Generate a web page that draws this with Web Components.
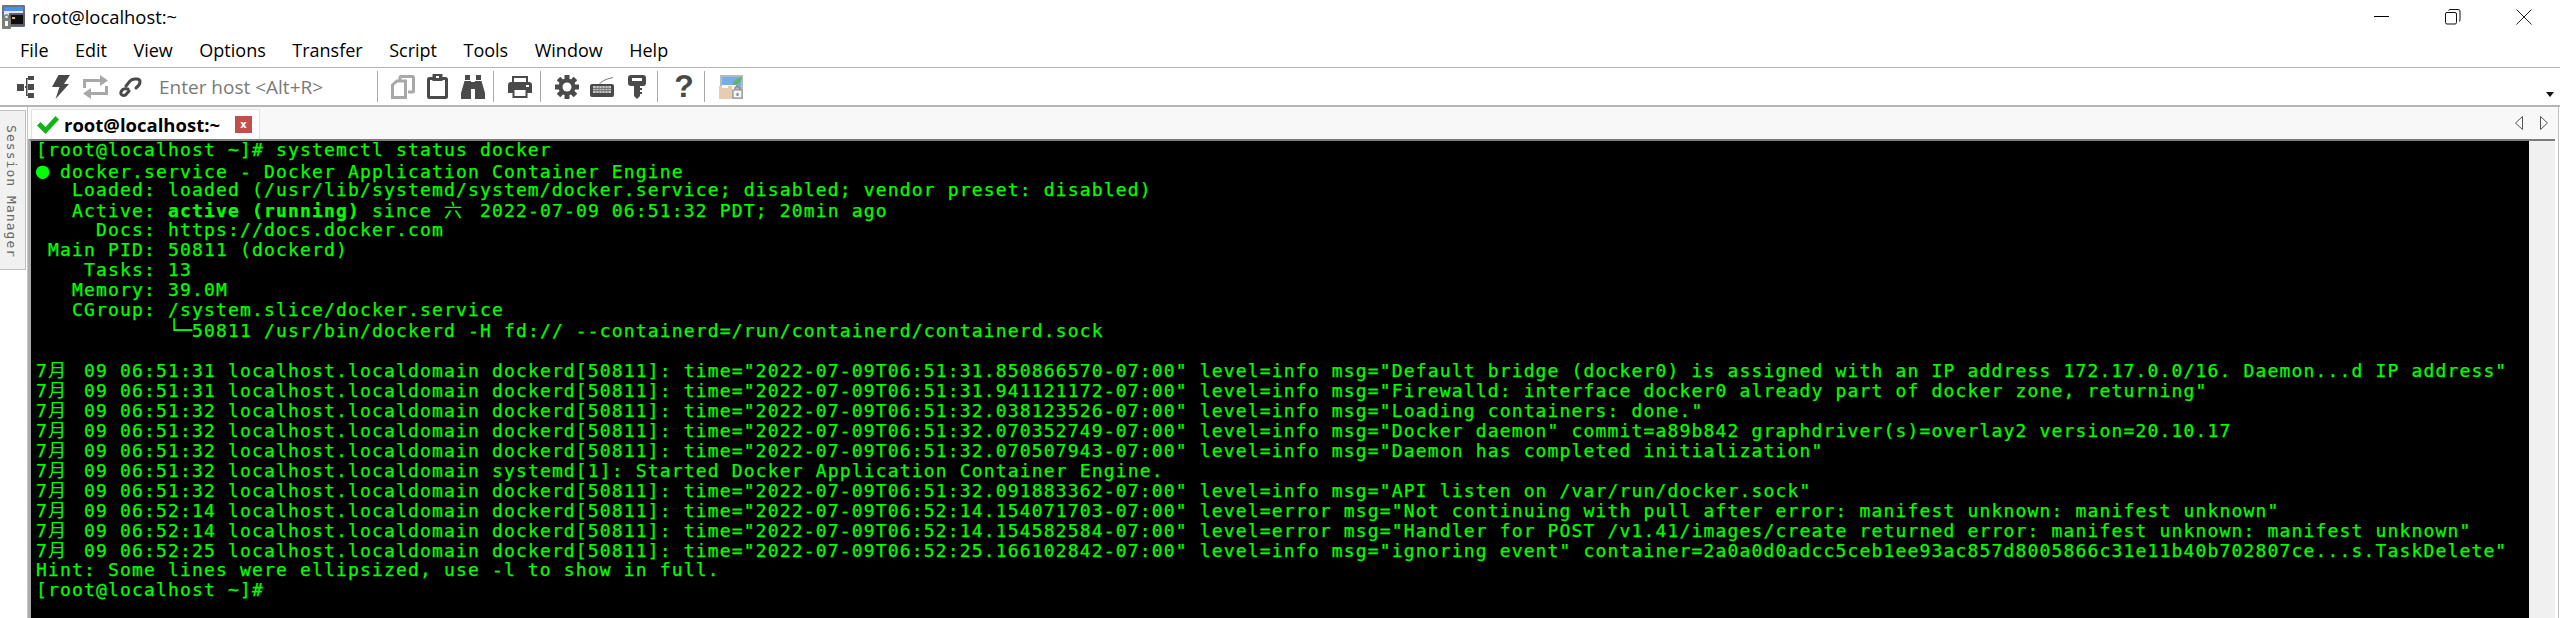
<!DOCTYPE html>
<html><head><meta charset="utf-8"><style>html,body{margin:0;padding:0;background:#fff;height:100%;overflow:hidden}</style></head><body>
<crt-app></crt-app>
<script>
const G='#4a4a4a',L='#a8a8a8';
const ico={
tree:`<svg width="18" height="22" viewBox="0 0 18 22" fill="${G}"><rect x="0" y="8" width="7" height="7"/><rect x="11" y="0" width="6" height="4"/><rect x="11" y="8" width="6" height="6"/><rect x="11" y="17" width="6" height="5"/><rect x="8" y="10" width="2" height="2"/><rect x="9" y="2" width="1.500" height="18"/><rect x="10" y="2" width="1" height="1"/><rect x="10" y="19" width="1" height="1"/></svg>`,
bolt:`<svg width="18" height="24" viewBox="0 0 18 24" fill="#484848"><path d="M6.500 0H18L12 9H17L3.500 24L7.500 12H0Z"/></svg>`,
loop:`<svg width="25" height="24" viewBox="0 0 25 24" fill="none" stroke="${L}" stroke-width="3"><path d="M1.500 13V5.500H18"/><path d="M23.500 11V18.500H7"/><path d="M17 0L25 5.500L17 11Z" fill="${L}" stroke="none"/><path d="M8 13L0 18.500L8 24Z" fill="${L}" stroke="none"/></svg>`,
link:`<svg width="23" height="20" viewBox="0 0 23 20" fill="none" stroke="${G}" stroke-width="3" stroke-linecap="round" stroke-linejoin="round"><path d="M7 9L11 4Q13 2 16 2H18Q21 2 21 5Q21 8 17 11"/><path d="M9 12Q4 11 2.500 14Q1 17 3 18Q5 19 7 17.500L10 14"/></svg>`,
copy:`<svg width="24" height="24" viewBox="0 0 24 24" fill="none" stroke="${L}" stroke-width="3"><path d="M1.500 10L6 6H14.500V22.500H1.500Z"/><path d="M9 5V2.500Q9 1.500 10 1.500H21.500Q22.500 1.500 22.500 2.500V16Q22.500 17 21.500 17H17"/></svg>`,
paste:`<svg width="21" height="25" viewBox="0 0 21 25" fill="none" stroke="${G}" stroke-width="3"><rect x="1.500" y="4.500" width="18" height="19" rx="1"/><rect x="5.500" y="0" width="10" height="7" fill="${G}" stroke="none"/><rect x="9" y="2" width="3" height="2" fill="#fff" stroke="none"/></svg>`,
bino:`<svg width="24" height="24" viewBox="0 0 24 24" fill="${G}"><path d="M4 0H9V5H4Z"/><path d="M15 0H20V5H15Z"/><path d="M3.500 6H10V24H0V18Z"/><path d="M20.500 6H14V24H24V18Z"/><rect x="10" y="7" width="4" height="7"/></svg>`,
printer:`<svg width="24" height="22" viewBox="0 0 24 22" fill="${G}"><rect x="5" y="1" width="14" height="7" fill="none" stroke="${G}" stroke-width="2"/><path d="M3 6H21Q24 6 24 9V17H0V9Q0 6 3 6Z"/><rect x="5.500" y="13" width="13" height="8" fill="#fff" stroke="${G}" stroke-width="2"/><rect x="18" y="9" width="3" height="2" fill="#fff"/></svg>`,
gear:`<svg width="24" height="24" viewBox="0 0 24 24"><g fill="${G}"><rect x="9.500" y="0" width="5" height="24"/><rect x="9.500" y="0" width="5" height="24" transform="rotate(45 12 12)"/><rect x="9.500" y="0" width="5" height="24" transform="rotate(90 12 12)"/><rect x="9.500" y="0" width="5" height="24" transform="rotate(135 12 12)"/><circle cx="12" cy="12" r="8.500"/></g><circle cx="12" cy="12" r="4.500" fill="#fff"/></svg>`,
kb:`<svg width="24" height="20" viewBox="0 0 24 20"><path d="M9 8Q11 3 23 .5" fill="none" stroke="#777"/><rect x="0" y="7" width="24" height="13" rx="2" fill="${G}"/><rect x="3" y="9" width="18" height="7" fill="#c8c8c8"/><path d="M6 9V16M9 9V16M12 9V16M15 9V16M18 9V16M3 11.500H21M3 13.500H21" stroke="#777" stroke-width="1"/></svg>`,
key:`<svg width="18" height="24" viewBox="0 0 18 24" fill="${G}"><path d="M3 0H15Q18 0 18 3V8Q18 11 15 11H12V13H14V15H12V17H14V19H12V21L9 24L6 21V11H3Q0 11 0 8V3Q0 0 3 0Z"/><rect x="4" y="3" width="10" height="3" fill="#fff"/></svg>`,
misc:`<svg width="24" height="24" viewBox="0 0 24 24"><rect x="1" y="0" width="23" height="24" fill="#b4bac2"/><rect x="3" y="2" width="19" height="9" fill="#79abe6"/><rect x="3" y="10" width="14" height="5" fill="#f2f4f7"/><path d="M13 9Q17 3 23 2Q22 8 17 10Z" fill="#5fb85a"/><rect x="0" y="11" width="13" height="13" fill="#e6cdb2"/><rect x="3" y="10" width="6" height="3" fill="#fff"/><rect x="14" y="15" width="9" height="8" fill="#f3f3f3" stroke="#8a8a8a"/><path d="M16 15V13Q18.500 10 21 13V15" fill="none" stroke="#8a8a8a" stroke-width="1.500"/><rect x="17.500" y="18" width="2" height="3" fill="#888"/></svg>`};
class CrtTitle extends HTMLElement{constructor(){super();this.attachShadow({mode:'open'}).innerHTML=`<style>:host{display:flex;height:33px;align-items:center;font:18.4px "Open Sans",sans-serif;color:#000}
.i{margin:0 7px 0 2px;display:flex}.s{flex:1}.w{display:flex;margin-right:1px}.w div{width:71px;height:33px;display:flex;align-items:center;justify-content:center}</style>
<span class="i"><svg width="23" height="24" viewBox="0 0 23 24"><rect x="0" y="0" width="23" height="22" rx="1" fill="#6a7280"/><rect x="2" y="2" width="19" height="4" fill="#4b8fe6"/><rect x="2" y="6" width="19" height="14" fill="#e4e7ec"/><rect x="7" y="8" width="16" height="13" fill="#5b5f66"/><rect x="9" y="10" width="12" height="9" fill="#0e0e0e"/><rect x="10" y="12" width="3" height="2" fill="#e6c23c"/><rect x="0" y="13" width="9" height="11" rx="1" fill="#7d7d7d"/><path d="M2.500 13V11Q4.500 8.500 6.500 11V13" fill="none" stroke="#7d7d7d" stroke-width="1.500"/><rect x="3" y="16" width="3" height="5" fill="#fff"/></svg></span><span>root@localhost:~</span><span class="s"></span>
<div class="w"><div><svg width="16" height="2"><rect width="15" height="1" fill="#000"/></svg></div><div><svg width="16" height="16" viewBox="0 0 16 16" fill="none" stroke="#111"><rect x=".5" y="3.500" width="11" height="11.500" rx="1.500"/><path d="M3.500 1.500Q4 .5 5 .5H13Q15 .5 15 2V11Q15 12 14 12.500"/></svg></div><div><svg width="16" height="16" viewBox="0 0 16 16" fill="none" stroke="#222"><path d="M.5.5L15.500 15.500M15.500.500L.5 15.500"/></svg></div></div>`}}
customElements.define('crt-title',CrtTitle);
class CrtMenu extends HTMLElement{constructor(){super();this.attachShadow({mode:'open'}).innerHTML=`<style>:host{display:flex;height:34px;align-items:center;padding-left:20px;gap:26.500px;font:18px "Open Sans",sans-serif;color:#000;border-bottom:1px solid #b5b5b5}</style>
<span>File</span><span>Edit</span><span>View</span><span>Options</span><span>Transfer</span><span>Script</span><span>Tools</span><span>Window</span><span>Help</span>`}}
customElements.define('crt-menu',CrtMenu);
class CrtTool extends HTMLElement{constructor(){super();this.attachShadow({mode:'open'}).innerHTML=`<style>:host{display:flex;height:37px;align-items:center;padding-left:17px;position:relative;font:19px "Open Sans",sans-serif}
span{display:flex;flex:none}.h{color:#7a7a7a;width:165px;white-space:nowrap}.sep{width:1px;height:31px;background:#a8a8a8}.q{width:18px;justify-content:center;font:bold 32px "Liberation Sans",sans-serif;color:#484848}.d{position:absolute;right:6px;top:24px;width:0;height:0;border:4px solid transparent;border-top:5px solid #111;border-bottom:0}</style>
<span>${ico.tree}</span><span style="margin-left:17px">${ico.bolt}</span><span style="margin-left:13px">${ico.loop}</span><span style="margin-left:11px">${ico.link}</span><span class="h" style="margin-left:17px">Enter host &lt;Alt+R&gt;</span><span class="sep" style="margin-left:53px"></span>
<span style="margin-left:13px">${ico.copy}</span><span style="margin-left:12px">${ico.paste}</span><span style="margin-left:13px">${ico.bino}</span><span class="sep" style="margin-left:8px"></span>
<span style="margin-left:14px">${ico.printer}</span><span class="sep" style="margin-left:8px"></span>
<span style="margin-left:14px">${ico.gear}</span><span style="margin-left:11px">${ico.kb}</span><span style="margin-left:14px">${ico.key}</span><span class="sep" style="margin-left:11px"></span>
<span class="q" style="margin-left:17px">?</span><span class="sep" style="margin-left:11px"></span>
<span style="margin-left:14px">${ico.misc}</span><span class="d"></span>`}}
customElements.define('crt-tool',CrtTool);
class CrtTabs extends HTMLElement{constructor(){super();this.attachShadow({mode:'open'}).innerHTML=`<style>:host{display:flex;height:32px;align-items:flex-end;background:#f8f8f8;font:bold 18.5px "Open Sans",sans-serif;color:#000}
.tab{display:flex;align-items:center;height:30px;width:229px;box-sizing:border-box;background:#fff;border:1px solid #e2e2e2;border-bottom:0;margin-left:3px;padding-left:5px}.c{width:17px;height:17px;background:#c0504d;color:#fff;font:bold 10px "DejaVu Sans",sans-serif;display:flex;align-items:center;justify-content:center;margin-left:15px}.s{flex:1}.n{display:flex;align-self:center;gap:17px;margin-right:10px}.t{margin-left:5px;white-space:nowrap}svg{flex:none}</style>
<div class="tab"><svg width="22" height="18" viewBox="0 0 22 18"><path d="M0 9.500L3.500 6L8.500 11L18.500 0L22 3.500L8.500 18Z" fill="#12b312"/></svg><span class="t">root@localhost:~</span><span class="c">x</span></div><span class="s"></span>
<span class="n"><svg width="8" height="14" viewBox="0 0 8 14" fill="#f8f8f8" stroke="#555"><path d="M7.500.500V13.500L.5 7Z"/></svg><svg width="8" height="14" viewBox="0 0 8 14" fill="#f8f8f8" stroke="#555"><path d="M.5.5V13.500L7.500 7Z"/></svg></span>`}}
customElements.define('crt-tabs',CrtTabs);
class CrtSide extends HTMLElement{constructor(){super();this.attachShadow({mode:'open'}).innerHTML=`<style>:host{display:flex;flex:none;width:26px;height:160px;box-sizing:border-box;justify-content:center;background:#f1f1f1;border:1px solid #c0c0c0;border-left:0;padding:14px 3px 0 0;font:13px "DejaVu Sans Mono",monospace;letter-spacing:1.050px;color:#666;margin-top:3px}span{writing-mode:vertical-rl;white-space:nowrap}</style><span>Session Manager</span>`}}
customElements.define('crt-side',CrtSide);
const lines=[
'[root@localhost ~]# systemctl status docker',
'● docker.service - Docker Application Container Engine',
'   Loaded: loaded (/usr/lib/systemd/system/docker.service; disabled; vendor preset: disabled)',
'   Active: <b>active (running)</b> since 六 2022-07-09 06:51:32 PDT; 20min ago',
'     Docs: https://docs.docker.com',
' Main PID: 50811 (dockerd)',
'    Tasks: 13',
'   Memory: 39.0M',
'   CGroup: /system.slice/docker.service',
'           └─50811 /usr/bin/dockerd -H fd:// --containerd=/run/containerd/containerd.sock',
'',
'7月 09 06:51:31 localhost.localdomain dockerd[50811]: time="2022-07-09T06:51:31.850866570-07:00" level=info msg="Default bridge (docker0) is assigned with an IP address 172.17.0.0/16. Daemon...d IP address"',
'7月 09 06:51:31 localhost.localdomain dockerd[50811]: time="2022-07-09T06:51:31.941121172-07:00" level=info msg="Firewalld: interface docker0 already part of docker zone, returning"',
'7月 09 06:51:32 localhost.localdomain dockerd[50811]: time="2022-07-09T06:51:32.038123526-07:00" level=info msg="Loading containers: done."',
'7月 09 06:51:32 localhost.localdomain dockerd[50811]: time="2022-07-09T06:51:32.070352749-07:00" level=info msg="Docker daemon" commit=a89b842 graphdriver(s)=overlay2 version=20.10.17',
'7月 09 06:51:32 localhost.localdomain dockerd[50811]: time="2022-07-09T06:51:32.070507943-07:00" level=info msg="Daemon has completed initialization"',
'7月 09 06:51:32 localhost.localdomain systemd[1]: Started Docker Application Container Engine.',
'7月 09 06:51:32 localhost.localdomain dockerd[50811]: time="2022-07-09T06:51:32.091883362-07:00" level=info msg="API listen on /var/run/docker.sock"',
'7月 09 06:52:14 localhost.localdomain dockerd[50811]: time="2022-07-09T06:52:14.154071703-07:00" level=error msg="Not continuing with pull after error: manifest unknown: manifest unknown"',
'7月 09 06:52:14 localhost.localdomain dockerd[50811]: time="2022-07-09T06:52:14.154582584-07:00" level=error msg="Handler for POST /v1.41/images/create returned error: manifest unknown: manifest unknown"',
'7月 09 06:52:25 localhost.localdomain dockerd[50811]: time="2022-07-09T06:52:25.166102842-07:00" level=info msg="ignoring event" container=2a0a0d0adcc5ceb1ee93ac857d8005866c31e11b40b702807ce...s.TaskDelete"',
'Hint: Some lines were ellipsized, use -l to show in full.',
'[root@localhost ~]#'];
class CrtTerm extends HTMLElement{constructor(){super();const html=lines.map(l=>{
 l=l.replace(/六/,'<i>六</i>').replace(/^7月/,'7<i>月</i>').replace(/^● /,'<i class="d">●</i> ').replace('└─','<i class="t">└─</i>');
 return `<div class="l">${l||'&nbsp;'}</div>`}).join('');
this.attachShadow({mode:'open'}).innerHTML=`<style>:host{display:block;flex:1;min-width:0;background:#000;color:#0f0;font:18px/20px "DejaVu Sans Mono","Noto Sans CJK SC",monospace;letter-spacing:1.160px;padding-left:5px;white-space:pre;-webkit-text-stroke:.25px #0f0}
i{font:18px/1 "Noto Sans CJK SC",sans-serif;letter-spacing:0;display:inline-block;width:24px;-webkit-text-stroke:0}i.d{width:12px;font:22px/1 "DejaVu Sans Mono",monospace}i.t{width:24px;font:20px/1 "DejaVu Sans Mono",monospace}.l{height:20px}.w{margin-top:-1px}</style><div class="w">${html}</div>`}}
customElements.define('crt-term',CrtTerm);
class CrtApp extends HTMLElement{constructor(){super();this.attachShadow({mode:'open'}).innerHTML=`<style>:host{display:flex;flex-direction:column;width:2560px;height:618px;background:#fff;overflow:hidden}
.main{flex:1;display:flex;min-height:0;border-top:2px solid #b5b5b5}.r{flex:1;display:flex;flex-direction:column;margin:0 1px 0 1px;min-width:0;border-left:1px solid #c8c8c8;border-right:1px solid #c0c0c0}.b{flex:1;display:flex;min-height:0;border-left:3px solid #ababab;border-top:2px solid #7c7c7c;margin-right:3px}.sb{width:26px;flex:none;background:#f0f0f0}</style>
<crt-title></crt-title><crt-menu></crt-menu><crt-tool></crt-tool>
<div class="main"><crt-side></crt-side><div class="r"><crt-tabs></crt-tabs><div class="b"><crt-term></crt-term><div class="sb"></div></div></div></div>`}}
customElements.define('crt-app',CrtApp);
</script></body></html>
